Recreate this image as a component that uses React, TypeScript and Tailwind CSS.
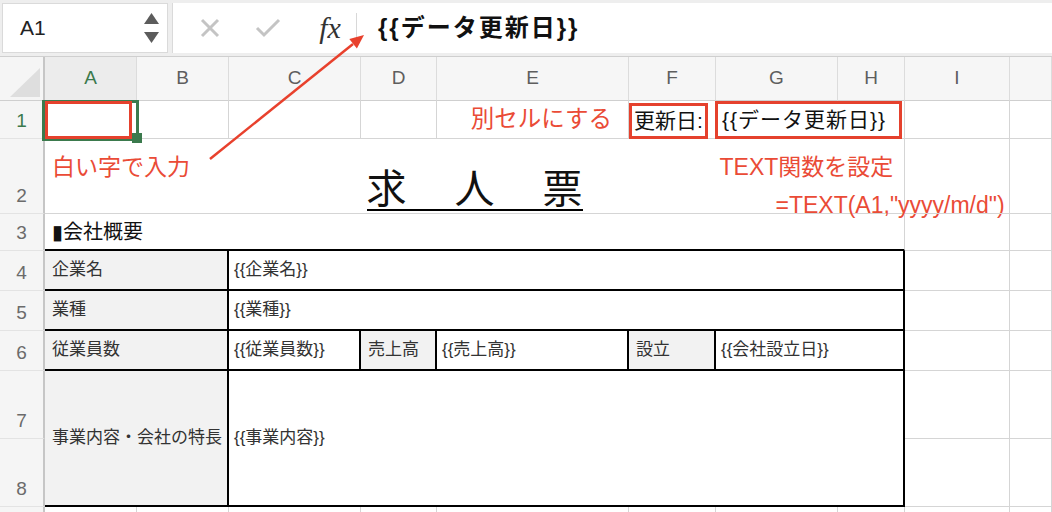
const grid = "border-r border-b border-[#d5d5d5]";
const tbl = "border-r-2 border-b-2 border-black";
const label = `${tbl} bg-[#f2f2f2] flex items-center pl-[7px] text-[17px] text-[#333] whitespace-nowrap`;
const value = `${tbl} flex items-center pl-[5px] text-[17px] text-[#333] whitespace-nowrap`;
const redText = "text-[#ea4b36]";
const redBox = "border-[3px] border-[#e5412d]";

const cols = ["A", "B", "C", "D", "E", "F", "G", "H", "I", ""];

const RowHead = ({ n, active = false }: { n?: number; active?: boolean }) => (
  <div className="flex items-end justify-center bg-[#f5f5f5] border-r-2 border-r-[#c6c6c6] border-b border-b-[#e3e3e3] pb-[5px]">
    <span className={active ? "text-[19px] leading-[24px] text-[#3b7a4d]" : "text-[19px] leading-[24px] text-[#6b6b6b]"}>
      {n}
    </span>
  </div>
);

const Empty = () => <div className={grid} />;

const FormulaBar = () => (
  <div className="h-[57px] bg-[#eeeeee] border-b border-[#cfcfcf] flex items-start pt-[3px] pl-[2px]">
    <div className="w-[166px] h-[50px] bg-white border border-[#dadada] flex items-center pl-[17px] pr-[8px]">
      <span className="text-[21px] text-[#222]">A1</span>
      <div className="ml-auto flex flex-col gap-[8px]">
        <svg width="15" height="11" viewBox="0 0 15 11">
          <path d="M7.5 0 L15 11 L0 11 Z" fill="#5c5c5c" />
        </svg>
        <svg width="15" height="11" viewBox="0 0 15 11">
          <path d="M0 0 L15 0 L7.5 11 Z" fill="#5c5c5c" />
        </svg>
      </div>
    </div>
    <div className="ml-[4px] flex-1 h-[50px] bg-white border-l border-[#dadada] flex items-center pl-[27px]">
      <svg width="20" height="20" viewBox="0 0 20 20">
        <path d="M2 2 L18 18 M18 2 L2 18" stroke="#c4c4c4" strokeWidth="3" />
      </svg>
      <svg className="ml-[35px]" width="26" height="20" viewBox="0 0 26 20">
        <path d="M2 10 L9 17 L24 2" stroke="#c4c4c4" strokeWidth="3" fill="none" />
      </svg>
      <span className="ml-[35px] w-[28px] text-center font-['Liberation_Serif',serif] italic text-[30px] leading-none text-[#333]">
        fx
      </span>
      <div className="ml-[12px] w-px h-[30px] bg-[#d8d8d8]" />
      <span className="ml-[21px] font-bold text-[24px] tracking-[2px] text-[#111]">{"{{データ更新日}}"}</span>
    </div>
  </div>
);

export default function App() {
  return (
    <div className="relative w-[1052px] h-[512px] overflow-hidden bg-white font-['Liberation_Sans','Noto_Sans_CJK_JP',sans-serif]">
      <FormulaBar />
      <div className="grid grid-cols-[45px_92px_92px_132px_76px_192px_87px_122px_67px_105px_1fr] grid-rows-[44px_38px_75px_37px_40px_40px_40px_68px_68px_20px]">
        {/* column headers */}
        <div className="relative bg-[#f5f5f5] border-r-2 border-r-[#c6c6c6] border-b border-b-[#cfcfcf]">
          <svg className="absolute left-[10px] top-[11px]" width="30" height="29" viewBox="0 0 30 29">
            <path d="M30 0 L30 29 L0 29 Z" fill="#dedede" />
          </svg>
        </div>
        {cols.map((c, i) => (
          <div
            key={i}
            className={
              i === 0
                ? "flex items-center justify-center bg-[#ececec] border-r border-r-[#dcdcdc] border-b border-b-[#cfcfcf] text-[19px] text-[#3b7a4d]"
                : "flex items-center justify-center bg-[#f6f6f6] border-r border-r-[#dcdcdc] border-b border-b-[#cfcfcf] text-[19px] text-[#5e5e5e]"
            }
          >
            {c}
          </div>
        ))}

        {/* row 1 */}
        <RowHead n={1} active />
        <div className={`${grid} relative`}>
          <div className="absolute left-[-3px] top-[-1px] w-[97px] h-[41px] border-[3px] border-[#3b7a4d]" />
          <div className={`relative w-[87px] h-[38px] ${redBox}`} />
          <div className="absolute left-[87px] top-[32px] w-[10px] h-[10px] bg-[#3b7a4d]" />
        </div>
        <Empty />
        <Empty />
        <Empty />
        <div className={`${grid} flex items-center justify-end pr-[16px] text-[23.5px] ${redText}`}>別セルにする</div>
        <div className={grid}>
          <div className={`w-[79px] h-[36px] mt-[2px] ${redBox} flex items-center pl-[2px] text-[21px] text-[#111] whitespace-nowrap`}>
            更新日:
          </div>
        </div>
        <div className={`${grid} col-span-2`}>
          <div className={`w-[187px] h-[38px] -ml-px ${redBox} flex items-center pl-[4px] text-[21px] tracking-[1px] text-[#111] whitespace-nowrap`}>
            {"{{データ更新日}}"}
          </div>
        </div>
        <Empty />
        <Empty />

        {/* row 2 */}
        <RowHead n={2} />
        <div className={`${grid} col-span-8 grid grid-cols-[minmax(0,1fr)_auto_minmax(0,1fr)]`}>
          <div className={`pt-[9px] pl-[7px] text-[23px] leading-[38px] whitespace-nowrap ${redText}`}>白い字で入力</div>
          <div className="self-end mb-[13px] flex gap-[48px] border-b-2 border-black text-[40px] leading-[40px] text-[#111]">
            <span>求</span>
            <span>人</span>
            <span>票</span>
          </div>
          <div className={`pt-[9px] pl-[137px] flex flex-col items-start text-[23px] leading-[38px] whitespace-nowrap ${redText}`}>
            <span>TEXT関数を設定</span>
            <span className="ml-[56px]">=TEXT(A1,"yyyy/m/d")</span>
          </div>
        </div>
        <Empty />
        <Empty />

        {/* row 3 */}
        <RowHead n={3} />
        <div className="col-span-8 border-r border-r-[#d5d5d5] border-b-2 border-b-black flex items-center pl-[7px] text-[20px] text-[#111]">
          ▮会社概要
        </div>
        <Empty />
        <Empty />

        {/* row 4 */}
        <RowHead n={4} />
        <div className={`${label} col-span-2`}>企業名</div>
        <div className={`${value} col-span-6`}>{"{{企業名}}"}</div>
        <Empty />
        <Empty />

        {/* row 5 */}
        <RowHead n={5} />
        <div className={`${label} col-span-2`}>業種</div>
        <div className={`${value} col-span-6`}>{"{{業種}}"}</div>
        <Empty />
        <Empty />

        {/* row 6 */}
        <RowHead n={6} />
        <div className={`${label} col-span-2`}>従業員数</div>
        <div className={value}>{"{{従業員数}}"}</div>
        <div className={label}>売上高</div>
        <div className={value}>{"{{売上高}}"}</div>
        <div className={label}>設立</div>
        <div className={`${value} col-span-2`}>{"{{会社設立日}}"}</div>
        <Empty />
        <Empty />

        {/* rows 7-8 */}
        <RowHead n={7} />
        <div className={`${label} col-span-2 row-span-2 pl-[6px]`}>事業内容・会社の特長</div>
        <div className={`${value} col-span-6 row-span-2 pl-[4px]`}>{"{{事業内容}}"}</div>
        <Empty />
        <Empty />
        <RowHead n={8} />
        <Empty />
        <Empty />

        {/* row 9, only its top edge is visible */}
        <RowHead />
        {cols.map((_, i) => (
          <Empty key={i} />
        ))}
      </div>

      <svg className="absolute inset-0 pointer-events-none" width="1052" height="512" viewBox="0 0 1052 512">
        <line x1="210" y1="159" x2="353" y2="44" stroke="#e8412d" strokeWidth="2.5" />
        <path d="M364 35 L356.9 48.5 L349.3 39.1 Z" fill="#e8412d" />
      </svg>
    </div>
  );
}
